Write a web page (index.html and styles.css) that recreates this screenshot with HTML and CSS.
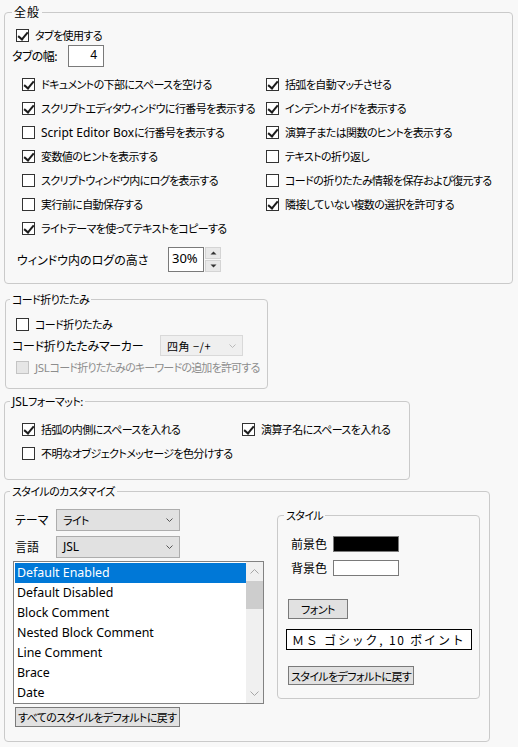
FILE: index.html
```html
<!DOCTYPE html>
<html lang="ja">
<head>
<meta charset="utf-8">
<title>設定</title>
<link rel="stylesheet" href="styles.css">
</head>
<body>
<fieldset class="grp g1">
  <legend>全般</legend>
  <div class="cbrow ind4 top"><span class="cb on"></span><span>タブを使用する</span></div>
  <div class="tabw"><span class="tablabel">タブの幅:</span><span class="numbox">4</span></div>
  <div class="cols c1">
    <div class="col">
      <div class="cbrow r24"><span class="cb on"></span><span>ドキュメントの下部にスペースを空ける</span></div>
      <div class="cbrow r24"><span class="cb on"></span><span>スクリプトエディタウィンドウに行番号を表示する</span></div>
      <div class="cbrow r24"><span class="cb"></span><span><span class="lat">Script Editor Box</span>に行番号を表示する</span></div>
      <div class="cbrow r24"><span class="cb on"></span><span>変数値のヒントを表示する</span></div>
      <div class="cbrow r24"><span class="cb"></span><span>スクリプトウィンドウ内にログを表示する</span></div>
      <div class="cbrow r24"><span class="cb"></span><span>実行前に自動保存する</span></div>
      <div class="cbrow r24"><span class="cb on"></span><span>ライトテーマを使ってテキストをコピーする</span></div>
    </div>
    <div class="col">
      <div class="cbrow r24"><span class="cb on"></span><span>括弧を自動マッチさせる</span></div>
      <div class="cbrow r24"><span class="cb on"></span><span>インデントガイドを表示する</span></div>
      <div class="cbrow r24"><span class="cb on"></span><span>演算子または関数のヒントを表示する</span></div>
      <div class="cbrow r24"><span class="cb"></span><span>テキストの折り返し</span></div>
      <div class="cbrow r24"><span class="cb"></span><span>コードの折りたたみ情報を保存および復元する</span></div>
      <div class="cbrow r24"><span class="cb on"></span><span>隣接していない複数の選択を許可する</span></div>
    </div>
  </div>
  <div class="logh">
    <span class="loglabel">ウィンドウ内のログの高さ</span>
    <span class="spin">
      <span class="spinval">30%</span>
      <span class="spinbtns">
        <span class="sbtn"><svg width="7" height="4" viewBox="0 0 7 4"><path d="M0.5 3.5 L3.5 0.5 L6.5 3.5Z" fill="#333"/></svg></span>
        <span class="sbtn"><svg width="7" height="4" viewBox="0 0 7 4"><path d="M0.5 0.5 L3.5 3.5 L6.5 0.5Z" fill="#333"/></svg></span>
      </span>
    </span>
  </div>
</fieldset>

<fieldset class="grp g2">
  <legend>コード折りたたみ</legend>
  <div class="cbrow ind4 g2first"><span class="cb"></span><span>コード折りたたみ</span></div>
  <div class="marker">
    <span class="markerlabel">コード折りたたみマーカー</span>
    <span class="sel dis"><span>四角 −/+</span><svg class="chev" width="7" height="4" viewBox="0 0 7 4"><path d="M0.5 0.5 L3.5 3.5 L6.5 0.5" fill="none" stroke="#b9b9b9" stroke-width="1"/></svg></span>
  </div>
  <div class="cbrow ind4 disrow"><span class="cb dis"></span><span><span class="lat">JSL</span>コード折りたたみのキーワードの追加を許可する</span></div>
</fieldset>

<fieldset class="grp g3">
  <legend><span class="lat">JSL</span>フォーマット:</legend>
  <div class="cols c3">
    <div class="cbrow r24"><span class="cb on"></span><span>括弧の内側にスペースを入れる</span></div>
    <div class="cbrow r24"><span class="cb on"></span><span>演算子名にスペースを入れる</span></div>
    <div class="cbrow r24"><span class="cb"></span><span>不明なオブジェクトメッセージを色分けする</span></div>
  </div>
</fieldset>

<fieldset class="grp g4">
  <legend>スタイルのカスタマイズ</legend>
  <div class="g4body">
    <div class="leftcol">
      <div class="selrow first"><span class="sellabel">テーマ</span><span class="sel"><span>ライト</span><svg class="chev" width="7" height="4" viewBox="0 0 7 4"><path d="M0.5 0.5 L3.5 3.5 L6.5 0.5" fill="none" stroke="#555" stroke-width="1"/></svg></span></div>
      <div class="selrow"><span class="sellabel">言語</span><span class="sel"><span class="lat">JSL</span><svg class="chev" width="7" height="4" viewBox="0 0 7 4"><path d="M0.5 0.5 L3.5 3.5 L6.5 0.5" fill="none" stroke="#555" stroke-width="1"/></svg></span></div>
      <div class="listbox">
        <ul class="items">
          <li class="selected">Default Enabled</li>
          <li>Default Disabled</li>
          <li>Block Comment</li>
          <li>Nested Block Comment</li>
          <li>Line Comment</li>
          <li>Brace</li>
          <li>Date</li>
        </ul>
        <div class="vscroll">
          <svg class="arr" width="9" height="5" viewBox="0 0 9 5"><path d="M0.5 4.5 L4.5 0.5 L8.5 4.5" fill="none" stroke="#a6a6a6" stroke-width="1"/></svg>
          <div class="thumb"></div>
          <div class="track"></div>
          <svg class="arr" width="9" height="5" viewBox="0 0 9 5"><path d="M0.5 0.5 L4.5 4.5 L8.5 0.5" fill="none" stroke="#a6a6a6" stroke-width="1"/></svg>
        </div>
      </div>
      <button class="btn resetall">すべてのスタイルをデフォルトに戻す</button>
    </div>
    <fieldset class="grp g5">
      <legend>スタイル</legend>
      <div class="colrow first"><span class="collabel">前景色</span><span class="swatch black"></span></div>
      <div class="colrow"><span class="collabel">背景色</span><span class="swatch white"></span></div>
      <button class="btn fontbtn">フォント</button>
      <div class="fontbox">ＭＳ ゴシック, 10 ポイント</div>
      <button class="btn resetone">スタイルをデフォルトに戻す</button>
    </fieldset>
  </div>
</fieldset>
</body>
</html>
```

FILE: styles.css
```css
* { box-sizing: border-box; }
html, body { margin: 0; padding: 0; }
body {
  width: 518px;
  height: 747px;
  overflow: hidden;
  background: #f8f8f8;
  font-family: "Noto Sans CJK JP", "Noto Sans", sans-serif;
  font-size: 11px;
  letter-spacing: -0.6px;
  line-height: 16px;
  color: #000;
  font-feature-settings: "palt";
  padding-top: 4px;
}
.lat {
  font-family: "Noto Sans", "Noto Sans CJK JP", sans-serif;
  font-size: 12px;
  letter-spacing: 0;
}

.grp {
  margin: 0;
  border: 1px solid #cacaca;
  border-radius: 4px;
  min-width: 0;
}
.grp legend {
  padding: 0 2px;
  line-height: 16px;
  height: 16px;
}
.g1 legend { font-size: 12px; letter-spacing: 1px; }

/* checkbox rows */
.cbrow { display: flex; align-items: center; gap: 6px; height: 18px; white-space: nowrap; }
.cbrow.r24 { height: 24px; }
.ind4 { padding-left: 4px; }
.cb {
  position: relative;
  flex: none;
  width: 13px;
  height: 13px;
  border: 1px solid #333;
  background: #fff;
}
.cb.on::after {
  content: "";
  position: absolute;
  left: 3px;
  top: 0px;
  width: 4px;
  height: 8px;
  border: solid #1c1c1c;
  border-width: 0 2px 2px 0;
  transform: rotate(40deg);
}
.cb.dis { background: #e6e6e6; border-color: #c4c4c4; }

/* group 1 */
.g1 { margin-left: 4px; width: 509px; padding: 0 7px 11px 7px; }
.g1 .top { margin-top: 6px; }
.tabw { display: flex; align-items: center; height: 22px; margin-top: 1px; }
.tablabel { width: 56px; font-size: 12px; }
.numbox {
  width: 36px;
  height: 22px;
  border: 1px solid #7a7a7a;
  background: #fff;
  text-align: right;
  padding-right: 6px;
  line-height: 18px;
  font-family: "Noto Sans", sans-serif;
  font-size: 12px;
  letter-spacing: 0;
}
.cols { display: grid; }
.c1 { grid-template-columns: 244px 1fr; margin-top: 5px; padding-left: 10px; }
.logh { display: flex; align-items: center; height: 25px; margin-top: 7px; padding-left: 5px; }
.loglabel { width: 151px; font-size: 12px; letter-spacing: 0; }
.spin { display: flex; height: 25px; }
.spinval {
  width: 36px;
  height: 25px;
  border: 1px solid #7a7a7a;
  background: #fff;
  padding-left: 3px;
  line-height: 20px;
  font-family: "Noto Sans", sans-serif;
  font-size: 13px;
  letter-spacing: 0;
}
.spinbtns { display: flex; flex-direction: column; gap: 1px; margin-left: 1px; width: 16px; }
.sbtn {
  flex: 1;
  display: flex;
  align-items: center;
  justify-content: center;
  background: #e9e9e9;
  border: 1px solid #d4d4d4;
}

/* group 2 */
.g2 { margin-top: 7px; margin-left: 5px; width: 263px; padding: 0 6px 12px 6px; }
.g2 legend { margin-left: -2px; }
.g2first { margin-top: 8px; }
.marker { display: flex; align-items: center; height: 21px; margin-top: 2px; white-space: nowrap; }
.markerlabel { width: 148px; font-size: 12px; letter-spacing: -0.3px; }
.sel {
  position: relative;
  display: flex;
  align-items: center;
  justify-content: space-between;
  height: 21px;
  background: #e1e1e1;
  border: 1px solid #adadad;
  padding: 0 6px 0 6px;
}
.marker .sel { width: 83px; letter-spacing: 0.5px; }
.sel.dis { background: #efefef; border-color: #d9d9d9; }
.disrow { margin-top: 2px; color: #8d8d8d; letter-spacing: -0.8px; }
.disrow .lat { font-size: 11.5px; letter-spacing: -0.3px; }

/* group 3 */
.g3 { margin-top: 4px; margin-left: 4px; width: 406px; padding: 0 7px 14px 7px; }
.g3 legend { margin-left: -2px; }
.c3 { grid-template-columns: 220px 1fr; margin-top: 8px; padding-left: 10px; }

/* group 4 */
.g4 { margin-top: 3px; margin-left: 4px; width: 486px; padding: 0 8px 14px 8px; }
.g4 legend { margin-left: -3px; }
.g4body { display: flex; align-items: flex-start; }
.leftcol { width: 251px; flex: none; display: flex; flex-direction: column; align-items: flex-start; }
.selrow { display: flex; align-items: center; height: 22px; margin-top: 5px; }
.selrow.first { margin-top: 10px; }
.sellabel { width: 43px; padding-left: 2px; font-size: 12px; letter-spacing: 0; }
.selrow .sel { width: 124px; height: 22px; }

.listbox {
  margin-top: 3px;
  width: 251px;
  height: 143px;
  border: 1px solid #828282;
  background: #fff;
  display: flex;
}
.items {
  list-style: none;
  margin: 0;
  padding: 1px 0 0 1px;
  flex: 1;
  font-family: "Noto Sans", sans-serif;
  font-size: 12.4px;
  letter-spacing: 0;
}
.items li { height: 20px; line-height: 20px; padding-left: 2px; white-space: nowrap; }
.items li.selected { background: #0078d7; color: #fff; }
.vscroll {
  width: 17px;
  flex: none;
  background: #f0f0f0;
  display: flex;
  flex-direction: column;
  align-items: center;
}
.vscroll .arr { margin: 7px 0; flex: none; }
.vscroll .thumb { width: 17px; height: 28px; background: #cdcdcd; flex: none; }
.vscroll .track { flex: 1; }

.btn {
  font: inherit;
  letter-spacing: -0.6px;
  font-feature-settings: "palt";
  color: #000;
  background: #e1e1e1;
  border: 1px solid #7a7a7a;
  border-radius: 0;
  padding: 0 2px;
  margin: 0;
  height: 20px;
  line-height: 16px;
  white-space: nowrap;
}
.resetall { margin-top: 3px; margin-left: 2px; }

.g5 { margin-left: 13px; margin-top: 8px; width: 203px; padding: 0 8px 13px 9px; }
.g5 legend { margin-left: -3px; }
.colrow { display: flex; align-items: center; height: 16px; margin-top: 8px; padding-left: 4px; }
.colrow.first { margin-top: 13px; }
.collabel { width: 42px; font-size: 12px; letter-spacing: 0; }
.swatch { width: 66px; height: 16px; border: 1px solid #7a7a7a; }
.swatch.black { background: #000; }
.swatch.white { background: #fff; }
.fontbtn { display: block; margin-top: 23px; margin-left: 1px; width: 60px; }
.fontbox {
  margin-top: 10px;
  margin-left: -1px;
  width: 186px;
  height: 21px;
  border: 1px solid #000;
  background: #fff;
  padding-left: 5px;
  line-height: 19px;
  font-size: 12px;
  font-feature-settings: normal;
  letter-spacing: 1.8px;
  white-space: nowrap;
}
.resetone { display: block; margin-top: 16px; margin-left: 1px; height: 19px; }
```
